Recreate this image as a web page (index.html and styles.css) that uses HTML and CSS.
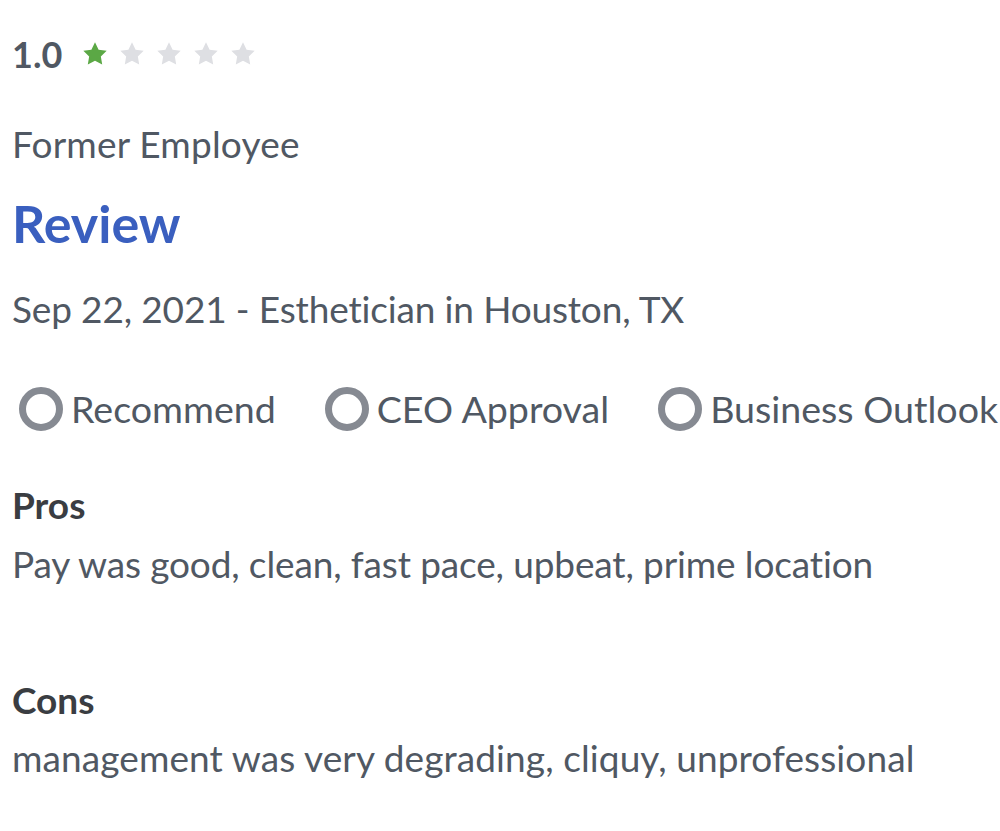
FILE: index.html
```html
<!DOCTYPE html>
<html lang="en">
<head>
<meta charset="utf-8">
<link rel="stylesheet" href="styles.css">
</head>
<body>
<div class="review">
  <div class="rating">
    <span class="score">1.0</span>
    <div class="stars">
      <svg class="star on" viewBox="0 0 24 24"><path d="M12 2l3.09 6.26L22 9.27l-5 4.87 1.18 6.88L12 17.77l-6.18 3.25L7 14.14 2 9.27l6.91-1.01L12 2z"/></svg>
      <svg class="star" viewBox="0 0 24 24"><path d="M12 2l3.09 6.26L22 9.27l-5 4.87 1.18 6.88L12 17.77l-6.18 3.25L7 14.14 2 9.27l6.91-1.01L12 2z"/></svg>
      <svg class="star" viewBox="0 0 24 24"><path d="M12 2l3.09 6.26L22 9.27l-5 4.87 1.18 6.88L12 17.77l-6.18 3.25L7 14.14 2 9.27l6.91-1.01L12 2z"/></svg>
      <svg class="star" viewBox="0 0 24 24"><path d="M12 2l3.09 6.26L22 9.27l-5 4.87 1.18 6.88L12 17.77l-6.18 3.25L7 14.14 2 9.27l6.91-1.01L12 2z"/></svg>
      <svg class="star" viewBox="0 0 24 24"><path d="M12 2l3.09 6.26L22 9.27l-5 4.87 1.18 6.88L12 17.77l-6.18 3.25L7 14.14 2 9.27l6.91-1.01L12 2z"/></svg>
    </div>
  </div>
  <div class="status">Former Employee</div>
  <h2 class="title">Review</h2>
  <div class="meta">Sep 22, 2021 - Esthetician in Houston, TX</div>
  <div class="checks">
    <div class="check"><span class="ring"></span><span>Recommend</span></div>
    <div class="check"><span class="ring"></span><span>CEO Approval</span></div>
    <div class="check"><span class="ring"></span><span>Business Outlook</span></div>
  </div>
  <div class="section pros">
    <div class="label">Pros</div>
    <div class="text">Pay was good, clean, fast pace, upbeat, prime location</div>
  </div>
  <div class="section cons">
    <div class="label">Cons</div>
    <div class="text">management was very degrading, cliquy, unprofessional</div>
  </div>
</div>
</body>
</html>
```
FILE: styles.css
```css
html, body {
  margin: 0;
  padding: 0;
  background: #ffffff;
}
body {
  font-family: "Lato", "Liberation Sans", sans-serif;
  color: #505863;
  font-size: 37px;
  line-height: 48px;
}
.review {
  padding: 30px 0 0 12px;
}
.rating {
  display: flex;
  align-items: center;
  height: 48px;
}
.score {
  font-weight: 700;
  font-size: 36px;
  color: #505863;
}
.stars {
  display: flex;
  gap: 9px;
  margin-left: 19px;
}
.star {
  width: 28px;
  height: 28px;
  fill: #dedfe3;
}
.star.on {
  fill: #5ba845;
}
.status {
  margin-top: 42px;
  letter-spacing: 0.2px;
}
.title {
  margin: 25px 0 0;
  font-size: 52px;
  line-height: 60px;
  font-weight: 700;
  color: #3a5fbf;
}
.meta {
  margin-top: 32px;
  letter-spacing: -0.15px;
}
.checks {
  display: flex;
  gap: 42px;
  margin-top: 52px;
  font-size: 37.6px;
}
.check {
  display: flex;
  align-items: center;
  gap: 8px;
}
.ring {
  box-sizing: border-box;
  width: 44px;
  height: 44px;
  border: 7px solid #868a92;
  border-radius: 50%;
  margin-left: 7px;
}
.section .label {
  font-weight: 700;
  color: #3a3d42;
}
.pros {
  margin-top: 48px;
}
.pros .text {
  margin-top: 11px;
  letter-spacing: -0.13px;
}
.cons {
  margin-top: 88px;
}
.cons .text {
  margin-top: 10px;
  letter-spacing: 0.1px;
}
```
